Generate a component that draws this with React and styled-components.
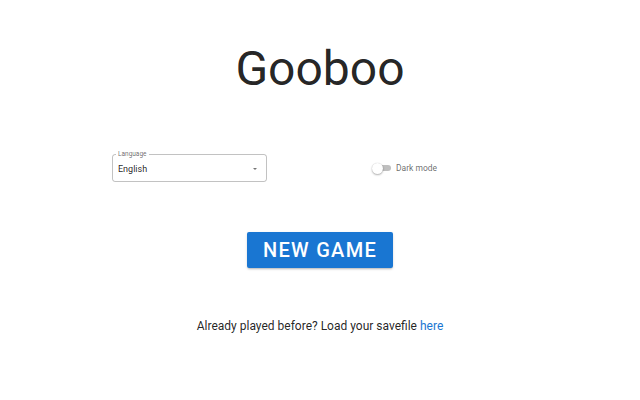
import React, { useState } from 'react';
import styled, { createGlobalStyle } from 'styled-components';

const GlobalStyle = createGlobalStyle`
    body {
        margin: 0;
        background: #FFFFFF;
        font-family: Roboto, 'Liberation Sans', sans-serif;
        color: rgba(0, 0, 0, 0.87);
    }
`

function App() {
    const [dark, setDark] = useState(false)
    const [lang, setLang] = useState('English')

    return (
        <>
            <GlobalStyle />
            <Page>
                <Title>Gooboo</Title>
                <SettingsRow>
                    <SelectField>
                        <SelectLabel>Language</SelectLabel>
                        <SelectValue>{lang}</SelectValue>
                        <SelectArrow />
                    </SelectField>
                    <SwitchWrap onClick={() => setDark(!dark)}>
                        <SwitchTrack $on={dark}>
                            <SwitchThumb $on={dark} />
                        </SwitchTrack>
                        <SwitchLabel>Dark mode</SwitchLabel>
                    </SwitchWrap>
                </SettingsRow>
                <NewGameButton>NEW GAME</NewGameButton>
                <LoadText>
                    Already played before? Load your savefile <LoadLink>here</LoadLink>
                </LoadText>
            </Page>
        </>
    );
}

export default App;

// 레이아웃
const Page = styled.div`
    display: flex;
    flex-direction: column;
    align-items: center;
    width: 640px;
    height: 400px;
    padding-top: 41px;
    box-sizing: border-box;
`
const Title = styled.h1`
    margin: 0;
    font-size: 48px;
    font-weight: 400;
    line-height: 56px;
    color: rgba(0, 0, 0, 0.87);
`
const SettingsRow = styled.div`
    display: grid;
    grid-template-columns: 1fr 1fr;
    align-items: center;
    width: 416px;
    margin-top: 57px;
`

// 셀렉트
const SelectField = styled.div`
    position: relative;
    display: flex;
    align-items: center;
    width: 155px;
    height: 28px;
    box-sizing: border-box;
    border: 1px solid rgba(0, 0, 0, 0.24);
    border-radius: 3px;
    padding: 0 9px 0 5px;
`
const SelectLabel = styled.span`
    position: absolute;
    top: -5px;
    left: 3px;
    padding: 0 2px;
    background: #FFFFFF;
    font-size: 6.5px;
    line-height: 8px;
    color: rgba(0, 0, 0, 0.6);
`
const SelectValue = styled.span`
    flex: 1;
    font-size: 9px;
    color: rgba(0, 0, 0, 0.87);
    padding-top: 1px;
`
const SelectArrow = styled.span`
    width: 0;
    height: 0;
    border-left: 2.5px solid transparent;
    border-right: 2.5px solid transparent;
    border-top: 2.5px solid rgba(0, 0, 0, 0.54);
    margin-top: 1px;
`

// 스위치
const SwitchWrap = styled.div`
    display: flex;
    align-items: center;
    gap: 5px;
    padding-left: 52px;
    cursor: pointer;
`
const SwitchTrack = styled.div`
    position: relative;
    width: 17px;
    height: 6px;
    border-radius: 4px;
    margin-left: 2px;
    background: ${props => props.$on ? 'rgba(25, 118, 210, 0.5)' : 'rgba(0, 0, 0, 0.25)'};
`
const SwitchThumb = styled.div`
    position: absolute;
    top: -2.5px;
    left: ${props => props.$on ? '7px' : '-2px'};
    width: 11px;
    height: 11px;
    border-radius: 50%;
    background: ${props => props.$on ? '#1976D2' : '#FFFFFF'};
    box-shadow: 0 1px 2px rgba(0, 0, 0, 0.3), 0 0 1px rgba(0, 0, 0, 0.2);
`
const SwitchLabel = styled.span`
    font-size: 8.5px;
    color: rgba(0, 0, 0, 0.6);
`

// 버튼
const NewGameButton = styled.button`
    margin-top: 50px;
    height: 36px;
    padding: 0 16px;
    border: none;
    border-radius: 2px;
    background: #1976D2;
    color: #FFFFFF;
    font-family: Roboto, 'Liberation Sans', sans-serif;
    font-size: 20px;
    font-weight: 500;
    letter-spacing: 1.3px;
    box-shadow: 0 2px 2px -1px rgba(0, 0, 0, 0.2), 0 1px 3px rgba(0, 0, 0, 0.12);
    cursor: pointer;
`
const LoadText = styled.p`
    margin: 48px 0 0;
    font-size: 12px;
    line-height: 20px;
    color: rgba(0, 0, 0, 0.87);
`
const LoadLink = styled.a`
    color: #1976D2;
    text-decoration: none;
    cursor: pointer;
`
